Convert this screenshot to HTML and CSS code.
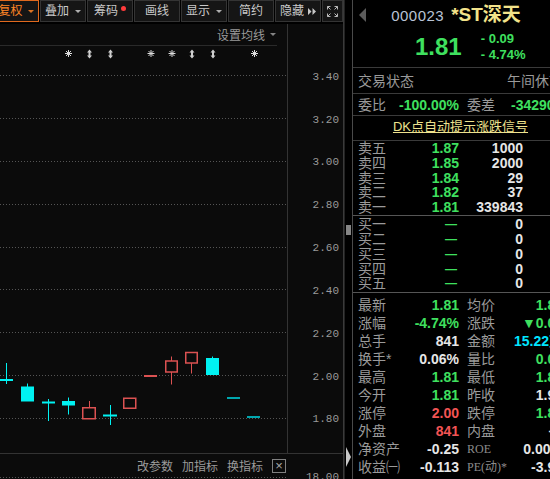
FILE: index.html
```html
<!DOCTYPE html>
<html lang="zh-CN">
<head>
<meta charset="utf-8">
<title>000023 *ST深天</title>
<link rel="stylesheet" href="styles.css">
</head>
<body>
<div class="app">
  <section class="main">
    <nav class="toolbar">
      <div class="tb-btn tb-active"><span>复权</span><i class="caret"></i></div>
      <div class="tb-btn"><span>叠加</span><i class="caret"></i></div>
      <div class="tb-btn"><span>筹码</span><i class="dot"></i></div>
      <div class="tb-btn"><span>画线</span></div>
      <div class="tb-btn"><span>显示</span><i class="caret"></i></div>
      <div class="tb-btn"><span>简约</span></div>
      <div class="tb-btn tb-hide"><span>隐藏</span><svg class="ff" width="8" height="7" viewBox="0 0 8 7"><path d="M0 0L3.5 3.5L0 7ZM4.5 0L8 3.5L4.5 7Z"/></svg></div>
      <div class="tb-btn tb-icon"><svg width="11" height="11" viewBox="0 0 11 11" class="fs"><path d="M0.5 3.5v-3h3M0.5 0.5l3 3M10.5 3.5v-3h-3M10.5 0.5l-3 3M0.5 7.5v3h3M0.5 10.5l3-3M10.5 7.5v3h-3M10.5 10.5l-3-3"/></svg></div>
    </nav>
    <div class="chart">
      <div class="plot">
        <div class="ma-bar"><span>设置均线</span><i class="caret"></i></div>
        <svg class="kline" width="287" height="407" viewBox="0 46 287 407">
          <defs>
            <g id="burst"><path class="burst" d="M-3.5 0H3.5M0 -3.5V3.5M-2.5 -2.5L2.5 2.5M2.5 -2.5L-2.5 2.5"/></g>
            <g id="updn"><path class="updn" d="M0 -4.5L2.5 -1.5H1V1.5H2.5L0 4.5L-2.5 1.5H-1V-1.5H-2.5Z"/></g>
          </defs>
          <g>
            <use href="#burst" x="68.5" y="53.5"/>
            <use href="#updn" x="89.5" y="54"/>
            <use href="#updn" x="110.5" y="54"/>
            <use href="#burst" x="151" y="53.5"/>
            <use href="#burst" x="172" y="53.5"/>
            <use href="#updn" x="192" y="54"/>
            <use href="#updn" x="213" y="54"/>
            <use href="#burst" x="254.5" y="53.5"/>
          </g>
          <g class="grid">
            <path d="M0 75.5H287M0 118.5H287M0 161.5H287M0 204.5H287M0 247.5H287M0 289.5H287M0 332.5H287M0 375.5H287M0 418.5H287"/>
          </g>
          <g class="dn">
            <path class="wick" d="M6.5 363V384M27.5 383.5V387M48.5 399V421M68.5 397.5V414.5M110.5 405V425M212.5 356.5V358.5"/>
            <path class="bar" d="M0 380H13M42 402.5H55M103 415.5H117"/>
            <rect x="21" y="386.5" width="13" height="15"/>
            <rect x="62" y="401" width="13" height="4.5"/>
            <rect x="206" y="358" width="13" height="17"/>
          </g>
          <g class="up">
            <path class="wick" d="M89.5 401V407.5M171.5 356.5V361M171.5 372V384.5M191.5 363V373.5"/>
            <rect x="82.75" y="407.75" width="12.5" height="11"/>
            <rect x="123.75" y="398.25" width="12" height="10"/>
            <rect x="165.75" y="361" width="11.5" height="11"/>
            <rect x="185.75" y="352.5" width="11.5" height="10.5"/>
            <path class="bar" d="M144 376H157"/>
          </g>
          <path class="flat" d="M227 398H240M247 417H260"/>
        </svg>
      </div>
      <svg class="axis" width="55" height="429" viewBox="288 24 55 429">
        <g class="ticks" text-anchor="end">
          <text x="339" y="79.5">3.40</text>
          <text x="339" y="122.5">3.20</text>
          <text x="339" y="165">3.00</text>
          <text x="339" y="208">2.80</text>
          <text x="339" y="251">2.60</text>
          <text x="339" y="293.5">2.40</text>
          <text x="339" y="336.5">2.20</text>
          <text x="339" y="379.5">2.00</text>
          <text x="339" y="422">1.80</text>
        </g>
      </svg>
    </div>
    <div class="ind">
      <div class="ind-plot">
        <div class="ind-tools">
          <span>改参数</span><span>加指标</span><span>换指标</span><span class="close">×</span>
        </div>
        <div class="ind-grid"></div>
      </div>
      <div class="ind-axis">18.00</div>
    </div>
  </section>
  <div class="splitter">
    <div class="grip"></div>
    <svg class="collapse" width="5" height="20" viewBox="0 0 5 20"><path d="M0 0L5 10L0 20Z"/></svg>
  </div>
  <aside class="quote">
    <div class="quote-inner">
      <header class="q-head">
        <div class="q-title">
          <i class="back"></i>
          <div class="q-name"><span class="code">000023</span><span class="name">*ST深天</span></div>
        </div>
        <div class="q-price">
          <span class="last">1.81</span>
          <div class="chg"><span>- 0.09</span><span>- 4.74%</span></div>
        </div>
      </header>
      <div class="q-row q-status"><span>交易状态</span><span>午间休市</span></div>
      <div class="q-row q-ratio">
        <div class="cell"><span>委比</span><b class="g">-100.00%</b></div>
        <div class="cell cell-left"><span>委差</span><b class="g">-34290</b></div>
      </div>
      <div class="q-row q-dk"><span>DK点自动提示涨跌信号</span></div>
      <div class="book book-sell">
        <div class="lv"><span>卖五</span><span class="g">1.87</span><span class="w">1000</span></div>
        <div class="lv"><span>卖四</span><span class="g">1.85</span><span class="w">2000</span></div>
        <div class="lv"><span>卖三</span><span class="g">1.84</span><span class="w">29</span></div>
        <div class="lv"><span>卖二</span><span class="g">1.82</span><span class="w">37</span></div>
        <div class="lv"><span>卖一</span><span class="g">1.81</span><span class="w">339843</span></div>
      </div>
      <div class="book book-buy">
        <div class="lv"><span>买一</span><span class="g nil">—</span><span class="w">0</span></div>
        <div class="lv"><span>买二</span><span class="g nil">—</span><span class="w">0</span></div>
        <div class="lv"><span>买三</span><span class="g nil">—</span><span class="w">0</span></div>
        <div class="lv"><span>买四</span><span class="g nil">—</span><span class="w">0</span></div>
        <div class="lv"><span>买五</span><span class="g nil">—</span><span class="w">0</span></div>
      </div>
      <div class="stats">
        <div class="cell"><span>最新</span><span class="g">1.81</span></div>
        <div class="cell"><span>均价</span><span class="g">1.81</span></div>
        <div class="cell"><span>涨幅</span><span class="g">-4.74%</span></div>
        <div class="cell"><span>涨跌</span><span class="g">▼0.09</span></div>
        <div class="cell"><span>总手</span><span class="w">841</span></div>
        <div class="cell"><span>金额</span><span class="c">15.22万</span></div>
        <div class="cell"><span>换手*</span><span class="w">0.06%</span></div>
        <div class="cell"><span>量比</span><span class="g">0.00</span></div>
        <div class="cell"><span>最高</span><span class="g">1.81</span></div>
        <div class="cell"><span>最低</span><span class="g">1.81</span></div>
        <div class="cell"><span>今开</span><span class="g">1.81</span></div>
        <div class="cell"><span>昨收</span><span class="w">1.90</span></div>
        <div class="cell"><span>涨停</span><span class="r">2.00</span></div>
        <div class="cell"><span>跌停</span><span class="g">1.81</span></div>
        <div class="cell"><span>外盘</span><span class="r">841</span></div>
        <div class="cell"><span>内盘</span><span class="w">—</span></div>
        <div class="cell"><span>净资产</span><span class="w">-0.25</span></div>
        <div class="cell"><span class="serif">ROE</span><span class="w">0.00%</span></div>
        <div class="cell"><span>收益㈠</span><span class="w">-0.113</span></div>
        <div class="cell"><span class="serif">PE(动)*</span><span class="w">-3.97</span></div>
      </div>
    </div>
  </aside>
</div>
</body>
</html>
```

FILE: styles.css
```css
* { box-sizing: border-box; }
html, body { margin: 0; padding: 0; }
body {
  width: 550px;
  height: 479px;
  overflow: hidden;
  background: #000;
  font-family: "Liberation Sans", "Noto Sans CJK SC", sans-serif;
  color: #9a9a9a;
}
i { display: block; }

.app { display: flex; width: 550px; height: 479px; overflow: hidden; }

/* ---------- left: chart ---------- */
.main {
  flex: none;
  width: 344px;
  display: flex;
  flex-direction: column;
  background: #0b0b0b;
  border-right: 1px solid #3a3a3a;
  overflow: hidden;
}
.toolbar {
  flex: none;
  display: flex;
  gap: 1px;
  height: 24px;
  padding-bottom: 2px;
  margin-left: -7px;
  background: #000;
}
.tb-btn {
  flex: none;
  width: 46px;
  height: 22px;
  border: 1px solid #343434;
  background: #151515;
  display: flex;
  align-items: center;
  justify-content: center;
  gap: 6px;
  font-size: 12px;
  line-height: 20px;
  color: #c9c9c9;
}
.tb-active { border-color: #e0691e; color: #ff8526; gap: 5px; }
.tb-icon { width: 21px; }
.tb-hide { gap: 4px; }
.caret {
  width: 0;
  height: 0;
  border-left: 3px solid transparent;
  border-right: 3px solid transparent;
  border-top: 3px solid currentColor;
  opacity: 0.85;
}
.dot {
  width: 5px;
  height: 5px;
  border-radius: 50%;
  background: #ff3b3b;
  align-self: flex-start;
  margin-top: 4.5px;
  margin-left: -3px;
}
.ff { fill: #c8c8c8; }
.fs { fill: none; stroke: #b8b8b8; stroke-width: 1; }

.chart { flex: none; height: 429px; display: flex; }
.plot {
  flex: none;
  width: 288px;
  display: flex;
  flex-direction: column;
  border-right: 1px solid #333;
}
.ma-bar {
  flex: none;
  height: 22px;
  margin-right: 10px;
  border-bottom: 1px solid #2a2a2a;
  display: flex;
  align-items: center;
  justify-content: flex-end;
  gap: 5px;
  padding-right: 1px;
  font-size: 12px;
  color: #9a9a9a;
}
.kline, .axis { display: block; flex: none; }

.burst { fill: none; stroke: #dcdcdc; stroke-width: 1; }
.updn { fill: #cfcfcf; }
.grid path { fill: none; stroke: #555; stroke-width: 1; stroke-dasharray: 1 2; }
.dn { fill: #00f2f2; stroke: none; }
.dn .wick { stroke: #00f2f2; stroke-width: 1; fill: none; }
.dn .bar { stroke: #00f2f2; stroke-width: 2; fill: none; }
.up { fill: none; stroke: #dc5252; stroke-width: 1.5; }
.up .wick { stroke-width: 1; }
.up .bar { stroke-width: 2; }
.flat { fill: none; stroke: #00a6ae; stroke-width: 2; }
.ticks { font: 11px "Liberation Mono", monospace; fill: #9a9a9a; }

.ind { flex: 1; display: flex; border-top: 1px solid #333; }
.ind-plot { flex: none; width: 288px; display: flex; flex-direction: column; }
.ind-tools {
  height: 23px;
  display: flex;
  align-items: center;
  justify-content: flex-end;
  gap: 9px;
  padding-right: 2px;
  font-size: 12px;
  color: #9a9a9a;
}
.close {
  width: 14px;
  height: 14px;
  border: 1px solid #808080;
  display: flex;
  align-items: center;
  justify-content: center;
  font-size: 13px;
  line-height: 12px;
  color: #a8a8a8;
}
.ind-grid {
  height: 1px;
  background: repeating-linear-gradient(90deg, #555 0 1px, transparent 1px 3px);
}
.ind-axis {
  flex: 1;
  font: 11px "Liberation Mono", monospace;
  line-height: 11px;
  color: #9a9a9a;
  text-align: right;
  padding: 18px 4px 0 0;
}

/* ---------- splitter ---------- */
.splitter {
  flex: none;
  width: 8px;
  display: flex;
  flex-direction: column;
  align-items: center;
  background: #000;
  border-left: 1px solid #222;
}
.grip {
  width: 5px;
  height: 10px;
  margin-top: 225px;
  background-image: radial-gradient(circle, #8a8a8a 0.7px, transparent 0.9px);
  background-size: 2px 2px;
}
.collapse { display: block; margin-top: auto; margin-bottom: 12px; fill: #c8c8c8; }

/* ---------- right: quote ---------- */
.quote {
  flex: none;
  width: 198px;
  border-left: 1px solid #4a4a4a;
  overflow: hidden;
  background: #000;
}
.quote-inner { width: 212px; font-size: 14px; color: #9a9a9a; }

.q-head { height: 68px; border-bottom: 1px solid #3a3a3a; padding: 5px 2px 0 5px; }
.q-title { height: 20px; display: flex; align-items: center; }
.back {
  flex: none;
  width: 0;
  height: 0;
  margin-left: 1px;
  border-right: 7px solid #5c5c5c;
  border-top: 7.5px solid transparent;
  border-bottom: 7.5px solid transparent;
}
.q-name {
  flex: 1;
  display: flex;
  justify-content: center;
  align-items: baseline;
  gap: 7px;
  line-height: 20px;
  padding-right: 17px;
  white-space: nowrap;
}
.code { font-size: 15px; letter-spacing: 0.5px; color: #b9c3d6; }
.name { font-size: 19px; font-weight: bold; color: #f3e38a; }
.q-price { display: flex; margin-top: 6px; padding-left: 57px; }
.last { font-size: 24px; line-height: 24px; font-weight: bold; color: #3fe05f; padding-top: 4px; }
.chg {
  display: flex;
  flex-direction: column;
  margin-left: 19px;
  font-size: 13px;
  line-height: 16px;
  font-weight: bold;
  color: #3fe05f;
  white-space: pre;
}

.q-row {
  display: flex;
  align-items: center;
  justify-content: space-between;
  padding: 0 2px 0 5px;
  border-bottom: 1px solid #3a3a3a;
  line-height: 18px;
  white-space: nowrap;
}
.q-status { height: 26px; }
.q-ratio { height: 22px; display: grid; grid-template-columns: 101px 96px; column-gap: 8px; align-content: center; }
.q-dk { height: 25px; justify-content: center; padding-bottom: 2px; }
.q-dk span { color: #eee28e; text-decoration: underline; font-size: 13px; }

.cell { display: flex; justify-content: space-between; white-space: nowrap; }
.cell-left { justify-content: flex-start; gap: 16px; }

.book { padding: 0 2px 0 5px; border-bottom: 1px solid #555; }
.book-buy { padding-top: 1.5px; padding-bottom: 1px; }
.lv {
  display: grid;
  grid-template-columns: 41px 60px 64px;
  height: 14.75px;
  line-height: 14.75px;
  white-space: nowrap;
}
.lv > span:nth-child(2), .lv > span:nth-child(3) { text-align: right; font-weight: bold; }
.nil { font-size: 12px; padding-right: 2px; }

.stats {
  display: grid;
  grid-template-columns: 101px 96px;
  column-gap: 8px;
  grid-auto-rows: 18px;
  line-height: 18px;
  padding: 3px 2px 0 5px;
}
.stats .cell > span:last-child { font-weight: bold; }
.serif { font-family: "Liberation Serif", "Noto Sans CJK SC", serif; font-size: 12px; color: #8c8c8c; }

.g { color: #3fe05f; }
.w { color: #e6e6e6; }
.r { color: #f25454; }
.c { color: #00e5ff; }
b { font-weight: bold; }
```
